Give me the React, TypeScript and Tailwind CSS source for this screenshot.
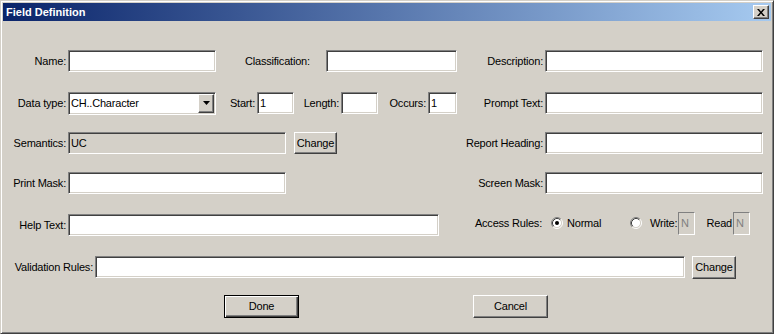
import type { ReactNode } from 'react';

const sunken =
  'border border-t-[#808080] border-l-[#808080] border-b-white border-r-white shadow-[inset_1px_1px_0_#404040,inset_-1px_-1px_0_#d4d0c8]';
const raised =
  'border border-t-white border-l-white border-b-[#404040] border-r-[#404040] shadow-[inset_-1px_-1px_0_#808080] bg-[#d4d0c8]';

function Label({ className = '', children }: { className?: string; children: ReactNode }) {
  return <span className={`shrink-0 whitespace-nowrap leading-none ${className}`}>{children}</span>;
}

function Edit({ className = '', value = '', grey = false }: { className?: string; value?: string; grey?: boolean }) {
  return (
    <input
      readOnly
      defaultValue={value}
      className={`h-[22px] shrink-0 px-[2px] text-black outline-none ${sunken} ${grey ? 'bg-[#d4d0c8]' : 'bg-white'} ${className}`}
    />
  );
}

function Button({ className = '', children }: { className?: string; children: ReactNode }) {
  return (
    <button className={`flex shrink-0 items-center justify-center leading-none ${raised} ${className}`}>
      {children}
    </button>
  );
}

function Radio({ checked = false }: { checked?: boolean }) {
  return (
    <svg width="12" height="12" viewBox="0 0 12 12" className="shrink-0">
      <circle cx="6" cy="6" r="4.5" fill="white" />
      <path d="M2.11 9.89 A5.5 5.5 0 0 1 9.89 2.11" fill="none" stroke="#808080" />
      <path d="M9.89 2.11 A5.5 5.5 0 0 1 2.11 9.89" fill="none" stroke="white" />
      <path d="M2.82 9.18 A4.5 4.5 0 0 1 9.18 2.82" fill="none" stroke="#404040" />
      <path d="M9.18 2.82 A4.5 4.5 0 0 1 2.82 9.18" fill="none" stroke="#d4d0c8" />
      {checked && <circle cx="6" cy="6" r="2" fill="black" />}
    </svg>
  );
}

function FlagBox() {
  return (
    <div className="flex h-[23px] w-[17px] shrink-0 items-center border border-t-[#808080] border-l-[#808080] border-b-white border-r-white bg-[#d4d0c8] pl-[2px] text-[#808080] leading-none">
      N
    </div>
  );
}

export default function App() {
  return (
    <div className="h-[334px] w-[774px] bg-[#d4d0c8] font-['Liberation_Sans',Arial,sans-serif] text-[11px] tracking-[-0.2px] text-black">
      <div className="flex h-full w-full flex-col border border-t-[#d4d0c8] border-l-[#d4d0c8] border-b-[#404040] border-r-[#404040] p-[2px] shadow-[inset_1px_1px_0_#fff,inset_-1px_-1px_0_#808080]">
        {/* Title bar */}
        <div className="flex h-[18px] shrink-0 items-center justify-between bg-[linear-gradient(to_right,#0a246a,#a6caf0)] pl-[3px] pr-[2px]">
          <span className="text-[11px] font-bold leading-none tracking-normal text-white">Field Definition</span>
          <button className="flex h-[14px] w-[16px] items-center justify-center border border-t-white border-l-white border-b-[#404040] border-r-[#404040] bg-[#d4d0c8] shadow-[inset_-1px_-1px_0_#808080]">
            <svg width="8" height="7" viewBox="0 0 8 7">
              <path d="M0 0h2l2 2.5L6 0h2L5 3.5 8 7H6L4 4.5 2 7H0l3-3.5z" fill="black" />
            </svg>
          </button>
        </div>

        {/* Body */}
        <div className="flex flex-1 flex-col">
          <div className="mt-[29px] flex h-[22px] items-center">
            <Label className="w-[63px] text-right">Name:</Label>
            <Edit className="ml-[2px] w-[148px]" />
            <Label className="ml-[29px] w-[81px]">Classification:</Label>
            <Edit className="w-[131px]" />
            <Label className="w-[86px] text-right">Description:</Label>
            <Edit className="ml-[2px] w-[218px]" />
          </div>

          <div className="mt-[20px] flex h-[22px] items-center">
            <Label className="w-[63px] text-right">Data type:</Label>
            <div className={`ml-[2px] flex h-[23px] w-[148px] shrink-0 items-stretch bg-white p-[1px] ${sunken}`}>
              <span className="flex flex-1 items-center pl-[1px] leading-none">CH..Character</span>
              <div className={`flex w-[16px] items-center justify-center ${raised}`}>
                <svg width="7" height="4" viewBox="0 0 7 4">
                  <path d="M0 0h7L3.5 4z" fill="black" />
                </svg>
              </div>
            </div>
            <Label className="w-[39px] text-right">Start:</Label>
            <Edit className="ml-[2px] w-[37px]" value="1" />
            <Label className="w-[45px] text-right">Length:</Label>
            <Edit className="ml-[2px] w-[37px]" />
            <Label className="w-[48px] text-right">Occurs:</Label>
            <Edit className="ml-[2px] w-[29px]" value="1" />
            <Label className="w-[86px] text-right">Prompt Text:</Label>
            <Edit className="ml-[2px] w-[218px]" />
          </div>

          <div className="mt-[18px] flex h-[22px] items-center">
            <Label className="w-[63px] text-right">Semantics:</Label>
            <Edit className="ml-[2px] w-[218px]" value="UC" grey />
            <Button className="ml-[8px] h-[22px] w-[43px]">Change</Button>
            <Label className="w-[206px] text-right">Report Heading:</Label>
            <Edit className="ml-[2px] w-[218px]" />
          </div>

          <div className="mt-[18px] flex h-[22px] items-center">
            <Label className="w-[63px] text-right">Print Mask:</Label>
            <Edit className="ml-[2px] w-[218px]" />
            <Label className="w-[257px] text-right">Screen Mask:</Label>
            <Edit className="ml-[2px] w-[218px]" />
          </div>

          <div className="mt-[20px] flex h-[22px] items-center">
            <Label className="w-[63px] text-right">Help Text:</Label>
            <Edit className="ml-[2px] w-[371px]" />
            <div className="mb-[4px] flex items-center">
              <Label className="w-[103px] text-right">Access Rules:</Label>
              <div className="ml-[9px]">
                <Radio checked />
              </div>
              <Label className="ml-[4px] w-[63px]">Normal</Label>
              <Radio />
              <Label className="ml-[8px] w-[28px]">Write:</Label>
              <FlagBox />
              <Label className="w-[37px] text-right">Read</Label>
              <div className="ml-[1px]">
                <FlagBox />
              </div>
            </div>
          </div>

          <div className="mt-[20px] flex h-[22px] items-center">
            <Label className="w-[90px] text-right">Validation Rules:</Label>
            <Edit className="ml-[2px] w-[590px]" />
            <Button className="ml-[7px] h-[23px] w-[44px]">Change</Button>
          </div>

          <div className="mt-[17px] flex h-[23px] items-center">
            <button className="ml-[221px] flex h-[23px] w-[75px] shrink-0 items-center justify-center border border-black bg-[#d4d0c8] leading-none shadow-[inset_1px_1px_0_#fff,inset_-1px_-1px_0_#404040,inset_-2px_-2px_0_#808080]">
              Done
            </button>
            <Button className="ml-[174px] h-[23px] w-[75px]">Cancel</Button>
          </div>
        </div>
      </div>
    </div>
  );
}
